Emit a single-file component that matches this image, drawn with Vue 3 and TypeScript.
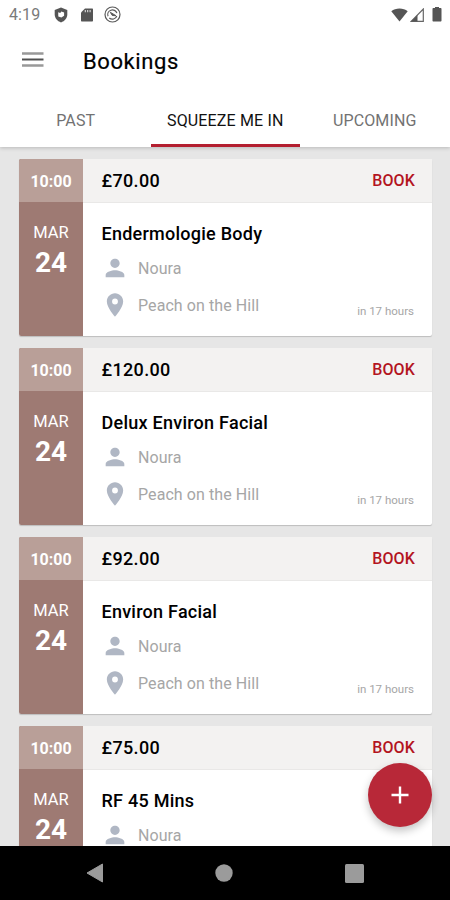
<script setup lang="ts">
interface Booking {
  time: string
  month: string
  day: string
  price: string
  title: string
  person: string
  place: string
  due: string
}

const common = { time: '10:00', month: 'MAR', day: '24', person: 'Noura', place: 'Peach on the Hill', due: 'in 17 hours' }
const bookings: Booking[] = [
  { ...common, price: '£70.00', title: 'Endermologie Body' },
  { ...common, price: '£120.00', title: 'Delux Environ Facial' },
  { ...common, price: '£92.00', title: 'Environ Facial' },
  { ...common, price: '£75.00', title: 'RF 45 Mins' },
]
const tabs: string[] = ['PAST', 'SQUEEZE ME IN', 'UPCOMING']
const activeTab = 'SQUEEZE ME IN'
</script>

<template>
  <div class="screen">
    <header class="top">
      <div class="status">
        <span class="clock">4:19</span>
        <svg class="shield" width="14" height="16" viewBox="0 0 14 16">
          <path d="M7 0.500 13.300 3v4.600c0 3.700-2.600 6.600-6.300 7.900C3.300 14.200.7 11.300.7 7.600V3Z" fill="#555" />
          <path d="M4.200 5.300 6.200 6l1.200-1.400 2.700 1v3.200L7.400 10.600 4.300 9.500Z" fill="#fff" />
        </svg>
        <svg class="sd" width="12" height="14" viewBox="0 0 12 14">
          <path d="M4 .5h7c.6 0 1 .4 1 1v11c0 .6-.4 1-1 1H1c-.6 0-1-.4-1-1v-8Z" fill="#555" />
          <path d="M4.300 2v2.200M6.700 2v2.200M9.100 2v2.200" stroke="#ddd" stroke-width="1.100" />
        </svg>
        <svg class="sync" width="17" height="17" viewBox="0 0 17 17" fill="none" stroke="#5a5a5a">
          <circle cx="8.500" cy="8.500" r="7.500" stroke-width="1.200" />
          <path d="M4 10.200a4.700 4.700 0 0 1 8.900-3.100M12.800 10a4.700 4.700 0 0 1-7.500 2" stroke-width="1.200" />
          <path d="M6.300 6.300 12 9.700 8.300 9.500Z" fill="#5a5a5a" stroke-width="1" />
        </svg>
        <span class="spacer"></span>
        <svg class="wifi" width="17" height="14" viewBox="0 0 17 14"><path d="M8.500 13.500.3 3.200C2.500 1.400 5.300.4 8.500.4s6 1 8.200 2.800Z" fill="#555" /></svg>
        <svg class="signal" width="14" height="14" viewBox="0 0 14 14">
          <path d="M13.300 1v12.300H1.200Z" fill="none" stroke="#666" stroke-width="1.200" />
          <path d="M7.500 7v6.500H1Z" fill="#555" />
        </svg>
        <svg class="battery" width="10" height="15" viewBox="0 0 10 15"><path d="M3 1V0h4v1h1.500c.6 0 1 .4 1 1v11.500c0 .6-.4 1-1 1h-7c-.6 0-1-.4-1-1V2c0-.6.4-1 1-1Z" fill="#555" /></svg>
      </div>
      <div class="bar">
        <svg class="menu" width="22" height="18" viewBox="0 0 22 18" fill="none">
          <path d="M0 2.500h21.500M0 14.500h21.500" stroke="#999" stroke-width="2.600" />
          <path d="M0 8.500h21.500" stroke="#505050" stroke-width="2" />
        </svg>
        <h1>Bookings</h1>
      </div>
      <nav class="tabs">
        <button v-for="tab in tabs" :key="tab" class="tab" :class="{ active: tab === activeTab }">{{ tab }}</button>
      </nav>
    </header>

    <main class="list">
      <article v-for="b in bookings" :key="b.title" class="card">
        <aside class="when">
          <div class="time">{{ b.time }}</div>
          <div class="month">{{ b.month }}</div>
          <div class="day">{{ b.day }}</div>
        </aside>
        <section class="info">
          <div class="head">
            <span class="price">{{ b.price }}</span>
            <span class="book">BOOK</span>
          </div>
          <div class="body">
            <h2>{{ b.title }}</h2>
            <div class="row">
              <svg width="28" height="28" viewBox="0 0 24 24" fill="#b0b7c4"><path d="M12 12c2.210 0 4-1.790 4-4s-1.790-4-4-4-4 1.790-4 4 1.790 4 4 4zm0 2c-2.670 0-8 1.340-8 4v2h16v-2c0-2.660-5.330-4-8-4z" /></svg>
              <span>{{ b.person }}</span>
            </div>
            <div class="row">
              <svg width="28" height="28" viewBox="0 0 24 24" fill="#b0b7c4"><path d="M12 2C8.130 2 5 5.130 5 9c0 5.250 7 13 7 13s7-7.750 7-13c0-3.870-3.130-7-7-7zm0 9.500a2.500 2.500 0 1 1 0-5 2.500 2.500 0 0 1 0 5z" /></svg>
              <span class="place">{{ b.place }}</span>
              <span class="due">{{ b.due }}</span>
            </div>
          </div>
        </section>
      </article>
    </main>

    <button class="fab" aria-label="Add">
      <svg width="18" height="18" viewBox="0 0 18 18"><path d="M9 .5v17M.5 9h17" stroke="#fff" stroke-width="2.400" /></svg>
    </button>

    <footer class="system">
      <svg width="18" height="20" viewBox="0 0 18 20"><path d="M16.500 1v18L1 10Z" fill="#9b9b9b" stroke="#9b9b9b" stroke-linejoin="round" /></svg>
      <svg width="18" height="18" viewBox="0 0 18 18"><circle cx="9" cy="9" r="8.700" fill="#9b9b9b" /></svg>
      <svg width="19" height="19" viewBox="0 0 19 19"><rect width="19" height="19" rx="1.500" fill="#9b9b9b" /></svg>
    </footer>
  </div>
</template>

<style>
body {
  margin: 0;
  overflow: hidden;
}
</style>

<style scoped>
.screen {
  position: relative;
  display: flex;
  flex-direction: column;
  width: 450px;
  height: 900px;
  overflow: hidden;
  background: #e6e6e6;
  font-family: Roboto, sans-serif;
}
.top {
  flex: none;
  z-index: 1;
  height: 147px;
  background: #fff;
  box-shadow: 0 1px 4px rgba(0, 0, 0, 0.2);
}
.status {
  display: flex;
  align-items: center;
  box-sizing: border-box;
  height: 30px;
  padding: 0 8px 1px 9px;
}
.clock {
  width: 45px;
  font-size: 16px;
  color: #7a7a7a;
  letter-spacing: 0.1px;
}
.sd {
  margin-left: 13px;
}
.sync {
  margin-left: 11px;
}
.spacer {
  flex: 1;
}
.signal {
  margin-left: 2px;
}
.battery {
  margin-left: 8px;
}
.bar {
  display: flex;
  align-items: center;
  height: 62px;
  padding-left: 22px;
}
.menu {
  margin-bottom: 2px;
}
h1 {
  margin: 0 0 0 39px;
  font-size: 22px;
  font-weight: 400;
  letter-spacing: 0.6px;
  color: #000;
  -webkit-text-stroke: 0.2px #000;
}
.tabs {
  display: flex;
  height: 55px;
  padding-left: 1px;
}
.tab {
  flex: none;
  width: 149.500px;
  padding: 5px 0 0;
  border: 0;
  border-bottom: 3px solid transparent;
  background: none;
  font: 400 16px Roboto, sans-serif;
  letter-spacing: 0.15px;
  color: #727272;
}
.tab.active {
  border-color: #b41f30;
  color: #111;
}
.list {
  flex: 1;
  min-height: 0;
  overflow: hidden;
  padding: 12px 18px 0 19px;
}
.card {
  display: flex;
  height: 177px;
  margin-bottom: 12.100px;
  border-radius: 2px;
  background: #fff;
  box-shadow: 0 1px 1px rgba(0, 0, 0, 0.18);
}
.when {
  width: 64px;
  border-radius: 2px 0 0 2px;
  overflow: hidden;
  background: #9e7a73;
  color: #fff;
  text-align: center;
}
.time {
  height: 43px;
  background: #b99f98;
  font-size: 16px;
  font-weight: 700;
  line-height: 45px;
}
.month {
  margin-top: 19px;
  font-size: 16.500px;
  line-height: 23px;
}
.day {
  margin-top: 3px;
  font-size: 28px;
  font-weight: 700;
  line-height: 31px;
}
.info {
  flex: 1;
}
.head {
  display: flex;
  justify-content: space-between;
  box-sizing: border-box;
  height: 44px;
  padding: 0 17px 0 18.500px;
  border-bottom: 1px solid #e9e8e7;
  background: #f3f2f1;
  line-height: 44px;
}
.price {
  font-size: 18px;
  font-weight: 500;
  letter-spacing: 0.35px;
}
.book {
  font-size: 16px;
  font-weight: 500;
  line-height: 43px;
  letter-spacing: 0.15px;
  color: #b3151f;
}
.body {
  padding: 18px 18px 0 18.500px;
}
h2 {
  margin: 0 0 7px;
  font-size: 18px;
  font-weight: 500;
  line-height: 26px;
  letter-spacing: 0.25px;
}
.row {
  display: flex;
  align-items: center;
  height: 28px;
  margin-bottom: 8.500px;
  font-size: 16px;
  color: #a6a6a6;
  letter-spacing: 0.08px;
}
.row svg {
  margin-left: -0.500px;
}
.row span {
  margin-left: 9px;
}
.row .place {
  padding-top: 1px;
}
.row .due {
  margin-left: auto;
  padding-top: 12px;
  font-size: 11.500px;
  letter-spacing: 0;
}
.fab {
  position: absolute;
  left: 368px;
  top: 763px;
  display: flex;
  align-items: center;
  justify-content: center;
  width: 64px;
  height: 64px;
  padding: 0;
  border: 0;
  border-radius: 50%;
  background: #b82838;
  box-shadow: 0 4px 8px rgba(0, 0, 0, 0.24);
}
.system {
  flex: none;
  z-index: 2;
  display: flex;
  align-items: center;
  justify-content: space-between;
  box-sizing: border-box;
  height: 54px;
  padding: 0 86px 0 85.500px;
  background: #000;
}
</style>
